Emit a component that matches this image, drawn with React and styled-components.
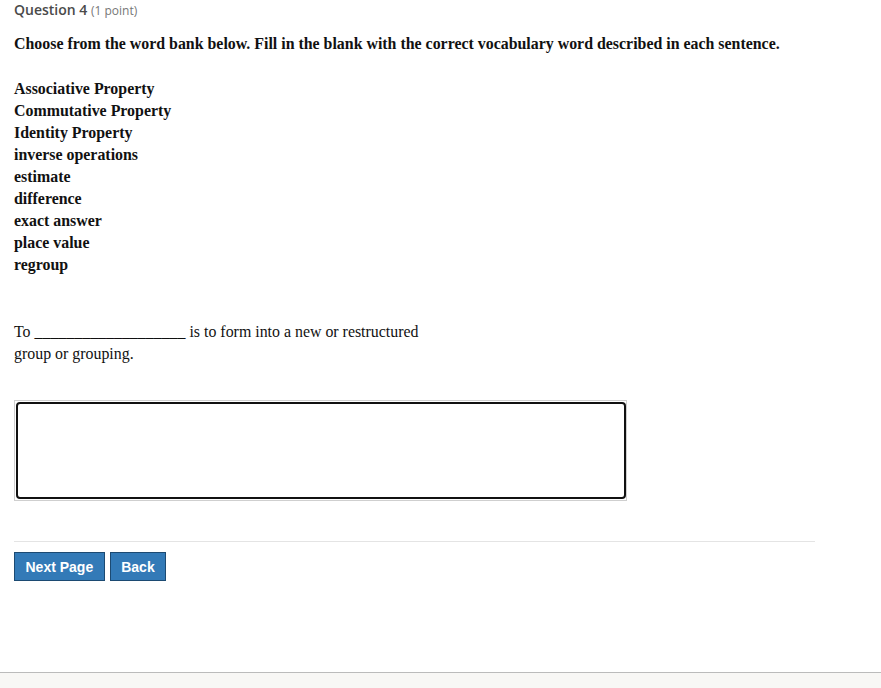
import React from 'react';
import styled, { createGlobalStyle } from 'styled-components';

const GlobalStyle = createGlobalStyle`
	html, body {
		margin: 0;
		padding: 0;
		background: #fff;
	}
	#root {
		min-height: 688px;
		display: flex;
		flex-direction: column;
	}
`;

const WORDS = [
	'Associative Property',
	'Commutative Property',
	'Identity Property',
	'inverse operations',
	'estimate',
	'difference',
	'exact answer',
	'place value',
	'regroup',
];

const App = () => {
	return (
		<>
			<GlobalStyle />
			<Page>
				<QuestionHeader>
					Question 4 <Points>(1 point)</Points>
				</QuestionHeader>
				<Prompt>
					<Instruction>
						Choose from the word bank below. Fill in the blank with the correct
						vocabulary word described in each sentence.
					</Instruction>
					<WordBank>
						{WORDS.map((w) => (
							<Word key={w}>{w}</Word>
						))}
					</WordBank>
					<Sentence>
						To ___________________ is to form into a new or restructured
						<br />
						group or grouping.
					</Sentence>
				</Prompt>
				<AnswerFrame>
					<Answer />
				</AnswerFrame>
				<Divider />
				<Buttons>
					<NavButton>Next Page</NavButton>
					<NavButton>Back</NavButton>
				</Buttons>
			</Page>
			<Footer />
		</>
	);
};

export default App;

const Page = styled.div`
	flex: 1;
	padding: 0 14px;
	font-family: 'Liberation Serif', 'Times New Roman', serif;
	color: #111;
`;

const QuestionHeader = styled.div`
	font-family: 'Open Sans', sans-serif;
	font-size: 14px;
	color: #4a4a4a;
	line-height: 20px;
	font-weight: 600;
`;

const Points = styled.span`
	font-size: 12px;
	font-weight: 400;
	color: #777;
`;

const Prompt = styled.div`
	margin-top: 12px;
	font-size: 15.9px;
	line-height: 22px;
`;

const Instruction = styled.p`
	margin: 0 0 23px;
	font-weight: bold;
`;

const WordBank = styled.div`
	display: flex;
	flex-direction: column;
	font-weight: bold;
`;

const Word = styled.div`
	line-height: 22px;
`;

const Sentence = styled.p`
	margin: 45px 0 0;
	line-height: 22px;
`;

const AnswerFrame = styled.div`
	margin-top: 35px;
	width: 610px;
	border: 1px solid #cfcfcf;
	padding: 1px 0 1px 1px;
`;

const Answer = styled.div`
	height: 93px;
	border: 2px solid #111;
	border-radius: 4px;
`;

const Divider = styled.hr`
	margin: 40px 0 10px;
	width: 801px;
	border: 0;
	border-top: 1px solid #e4e4e4;
`;

const Buttons = styled.div`
	display: flex;
	gap: 5px;
`;

const NavButton = styled.button`
	font-family: 'Liberation Sans', Arial, sans-serif;
	font-weight: bold;
	font-size: 14px;
	color: #fff;
	background: #337ab7;
	border: 1px solid #1c4a72;
	border-radius: 0;
	height: 29px;
	padding: 0 10.5px;
	cursor: pointer;
`;

const Footer = styled.div`
	height: 15px;
	border-top: 1px solid #bbb;
	background: #f8f7f5;
`;
